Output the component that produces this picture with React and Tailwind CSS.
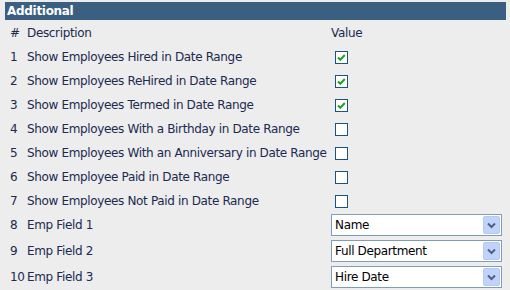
import React from 'react';

const rows = [
  { n: 1, label: 'Show Employees Hired in Date Range', checked: true },
  { n: 2, label: 'Show Employees ReHired in Date Range', checked: true },
  { n: 3, label: 'Show Employees Termed in Date Range', checked: true },
  { n: 4, label: 'Show Employees With a Birthday in Date Range', checked: false },
  { n: 5, label: 'Show Employees With an Anniversary in Date Range', checked: false },
  { n: 6, label: 'Show Employee Paid in Date Range', checked: false },
  { n: 7, label: 'Show Employees Not Paid in Date Range', checked: false },
];

const selects = [
  { n: 8, label: 'Emp Field 1', value: 'Name' },
  { n: 9, label: 'Emp Field 2', value: 'Full Department' },
  { n: 10, label: 'Emp Field 3', value: 'Hire Date' },
];

function CheckBox({ checked }) {
  return (
    <div className="ml-[4px] w-[13px] h-[13px] border border-[#1c5180] bg-white flex items-center justify-center">
      {checked && (
        <svg width="9" height="9" viewBox="0 0 9 9">
          <path d="M1 4.5 L3.3 6.8 L7.8 2" stroke="#21a121" strokeWidth="2" fill="none" />
        </svg>
      )}
    </div>
  );
}

function Select({ value }) {
  return (
    <div className="mt-[1px] w-[171px] h-[22px] border border-[#7f9db9] bg-white flex items-center justify-between pl-[3px] pr-[1px]">
      <span className="text-black">{value}</span>
      <div className="w-[17px] h-[18px] rounded-[2px] bg-[#c1d3fb] border border-[#b7c9f0] flex items-center justify-center">
        <svg width="9" height="7" viewBox="0 0 9 7">
          <path d="M1 1.5 L4.5 5 L8 1.5" stroke="#4d6185" strokeWidth="2" fill="none" />
        </svg>
      </div>
    </div>
  );
}

export default function App() {
  return (
    <div
      className="w-[510px] h-[290px] bg-[#ededed] pt-[2px] px-[5px] text-[#20294f] text-[12px] tracking-[-0.35px]"
      style={{ fontFamily: 'Tahoma, "DejaVu Sans", sans-serif' }}
    >
      {/* Header */}
      <div className="h-[18px] w-[501px] bg-[#3a5f80] text-white font-bold text-[12px] tracking-[-0.3px] leading-[18px] pl-[2px]">
        Additional
      </div>

      <div className="pl-[5px]">
        <div className="flex items-center h-[25px] pt-[1px]">
          <div className="w-[17px]">#</div>
          <div className="w-[304px]">Description</div>
          <div>Value</div>
        </div>

        {rows.map((r) => (
          <div key={r.n} className="flex items-center h-[24px]">
            <div className="w-[17px]">{r.n}</div>
            <div className="w-[304px] whitespace-nowrap">{r.label}</div>
            <CheckBox checked={r.checked} />
          </div>
        ))}

        {selects.map((s) => (
          <div key={s.n} className="flex items-start h-[26px]">
            <div className="w-[17px] leading-[24px]">{s.n}</div>
            <div className="w-[304px] leading-[24px]">{s.label}</div>
            <Select value={s.value} />
          </div>
        ))}
      </div>
    </div>
  );
}
